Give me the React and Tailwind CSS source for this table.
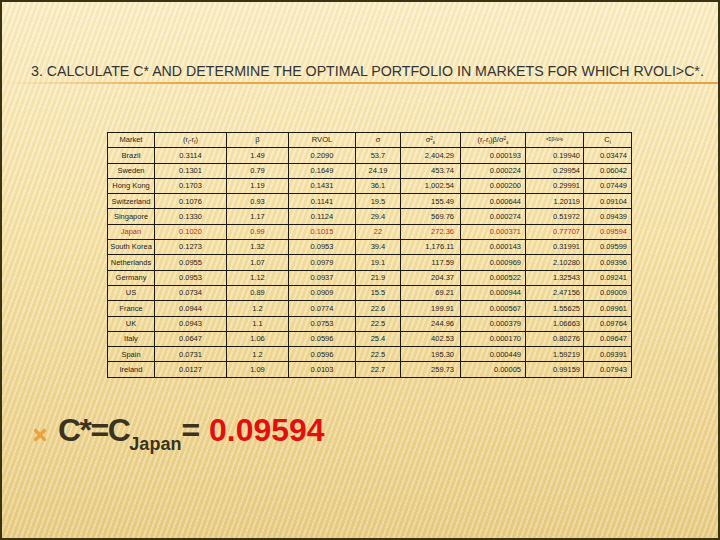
const rows = [
  ['Brazil', '0.3114', '1.49', '0.2090', '53.7', '2,404.29', '0.000193', '0.19940', '0.03474'],
  ['Sweden', '0.1301', '0.79', '0.1649', '24.19', '453.74', '0.000224', '0.29954', '0.06042'],
  ['Hong Kong', '0.1703', '1.19', '0.1431', '36.1', '1,002.54', '0.000200', '0.29991', '0.07449'],
  ['Switzerland', '0.1076', '0.93', '0.1141', '19.5', '155.49', '0.000644', '1.20119', '0.09104'],
  ['Singapore', '0.1330', '1.17', '0.1124', '29.4', '569.76', '0.000274', '0.51972', '0.09439'],
  ['Japan', '0.1020', '0.99', '0.1015', '22', '272.36', '0.000371', '0.77707', '0.09594'],
  ['South Korea', '0.1273', '1.32', '0.0953', '39.4', '1,176.11', '0.000143', '0.31991', '0.09599'],
  ['Netherlands', '0.0955', '1.07', '0.0979', '19.1', '117.59', '0.000969', '2.10280', '0.09396'],
  ['Germany', '0.0953', '1.12', '0.0937', '21.9', '204.37', '0.000522', '1.32543', '0.09241'],
  ['US', '0.0734', '0.89', '0.0909', '15.5', '69.21', '0.000944', '2.47156', '0.09009'],
  ['France', '0.0944', '1.2', '0.0774', '22.6', '199.91', '0.000567', '1.55625', '0.09961'],
  ['UK', '0.0943', '1.1', '0.0753', '22.5', '244.96', '0.000379', '1.06663', '0.09764'],
  ['Italy', '0.0647', '1.06', '0.0596', '25.4', '402.53', '0.000170', '0.80276', '0.09647'],
  ['Spain', '0.0731', '1.2', '0.0596', '22.5', '195.30', '0.000449', '1.59219', '0.09391'],
  ['Ireland', '0.0127', '1.09', '0.0103', '22.7', '259.73', '0.00005', '0.99159', '0.07943'],
]

// largeur + alignement de chaque colonne
const cols = [
  'w-[47px] text-center',
  'w-[72px] text-center',
  'w-[62px] text-center',
  'w-[67px] text-center',
  'w-[45px] text-center',
  'w-[60px] text-right pr-[6px]',
  'w-[65px] text-right pr-[4px]',
  'w-[58px] text-right pr-[3px]',
  'w-[48px] text-right pr-[4px]',
]

const cell = 'border border-[#1c1a12] h-[15.3px] p-0 leading-none'

function Header() {
  return (
    <tr>
      <td className={`${cell} ${cols[0]}`}>Market</td>
      <td className={`${cell} ${cols[1]}`}>(r<sub className="text-[5px]">i</sub>-r<sub className="text-[5px]">f</sub>)</td>
      <td className={`${cell} ${cols[2]}`}>β</td>
      <td className={`${cell} ${cols[3]}`}>RVOL</td>
      <td className={`${cell} ${cols[4]}`}>σ</td>
      <td className={`${cell} w-[60px] text-center`}>σ<sup className="text-[5px]">2</sup><sub className="text-[5px]">ε</sub></td>
      <td className={`${cell} w-[65px] text-center`}>(r<sub className="text-[5px]">i</sub>-r<sub className="text-[5px]">f</sub>)β/σ<sup className="text-[5px]">2</sup><sub className="text-[5px]">ε</sub></td>
      <td className={`${cell} w-[58px] text-center text-[4.5px]`}>=Σβ²/σ²ε</td>
      <td className={`${cell} w-[48px] text-center`}>C<sub className="text-[5px]">i</sub></td>
    </tr>
  )
}

export default function App() {
  return (
    <div
      className="w-[720px] h-[540px] border-2 border-[#3a3312] flex flex-col text-[#2e2a1e] bg-[image:repeating-linear-gradient(110deg,rgba(255,255,255,0.24)_0px,rgba(255,255,255,0.24)_2px,rgba(200,165,80,0.1)_2px,rgba(200,165,80,0.1)_5px),linear-gradient(to_bottom,#fcf0c8,#f6e2a6_45%,#e9cd84)]"
      style={{ fontFamily: '"Liberation Sans", Arial, sans-serif' }}
    >
      {/* titre */}
      <div className="pt-[61px] pl-[29px] text-[14.2px] leading-[16px] text-[#333] whitespace-nowrap">
        3. CALCULATE C* AND DETERMINE THE OPTIMAL PORTFOLIO IN MARKETS FOR WHICH RVOLI&gt;C*.
      </div>
      <div className="mt-[3px] h-[2px] bg-[image:linear-gradient(to_right,rgba(232,168,72,0)_0%,#e8a848_25%,#e6a444_100%)]" />

      {/* tableau */}
      <div className="mt-[48px] pl-[105px]">
        <table className="border-collapse text-[7.5px] text-[#1e1e1e] table-fixed">
          <tbody>
            <Header />
            {rows.map((r) => (
              <tr key={r[0]} className={r[0] === 'Japan' ? 'text-[#c42b22]' : ''}>
                {r.map((v, i) => (
                  <td key={i} className={`${cell} ${cols[i]}`}>{v}</td>
                ))}
              </tr>
            ))}
          </tbody>
        </table>
      </div>

      {/* C* */}
      <div className="mt-[36px] pl-[31px] flex items-center gap-[11px]">
        <svg width="14" height="14" viewBox="0 0 14 14" className="-mt-[4px]">
          <path d="M2.5 2.5 L11.5 11.5 M11.5 2.5 L2.5 11.5" stroke="#e9a23e" strokeWidth="3.2" strokeLinecap="round" />
        </svg>
        <div className="text-[32px] leading-[32px] font-bold text-[#3b3320]">
          <span className="tracking-[-1.5px]">C*=C</span>
          <span className="text-[18px] align-[-9px]">Japan</span>= <span className="text-[#e01010]">0.09594</span>
        </div>
      </div>
    </div>
  )
}
